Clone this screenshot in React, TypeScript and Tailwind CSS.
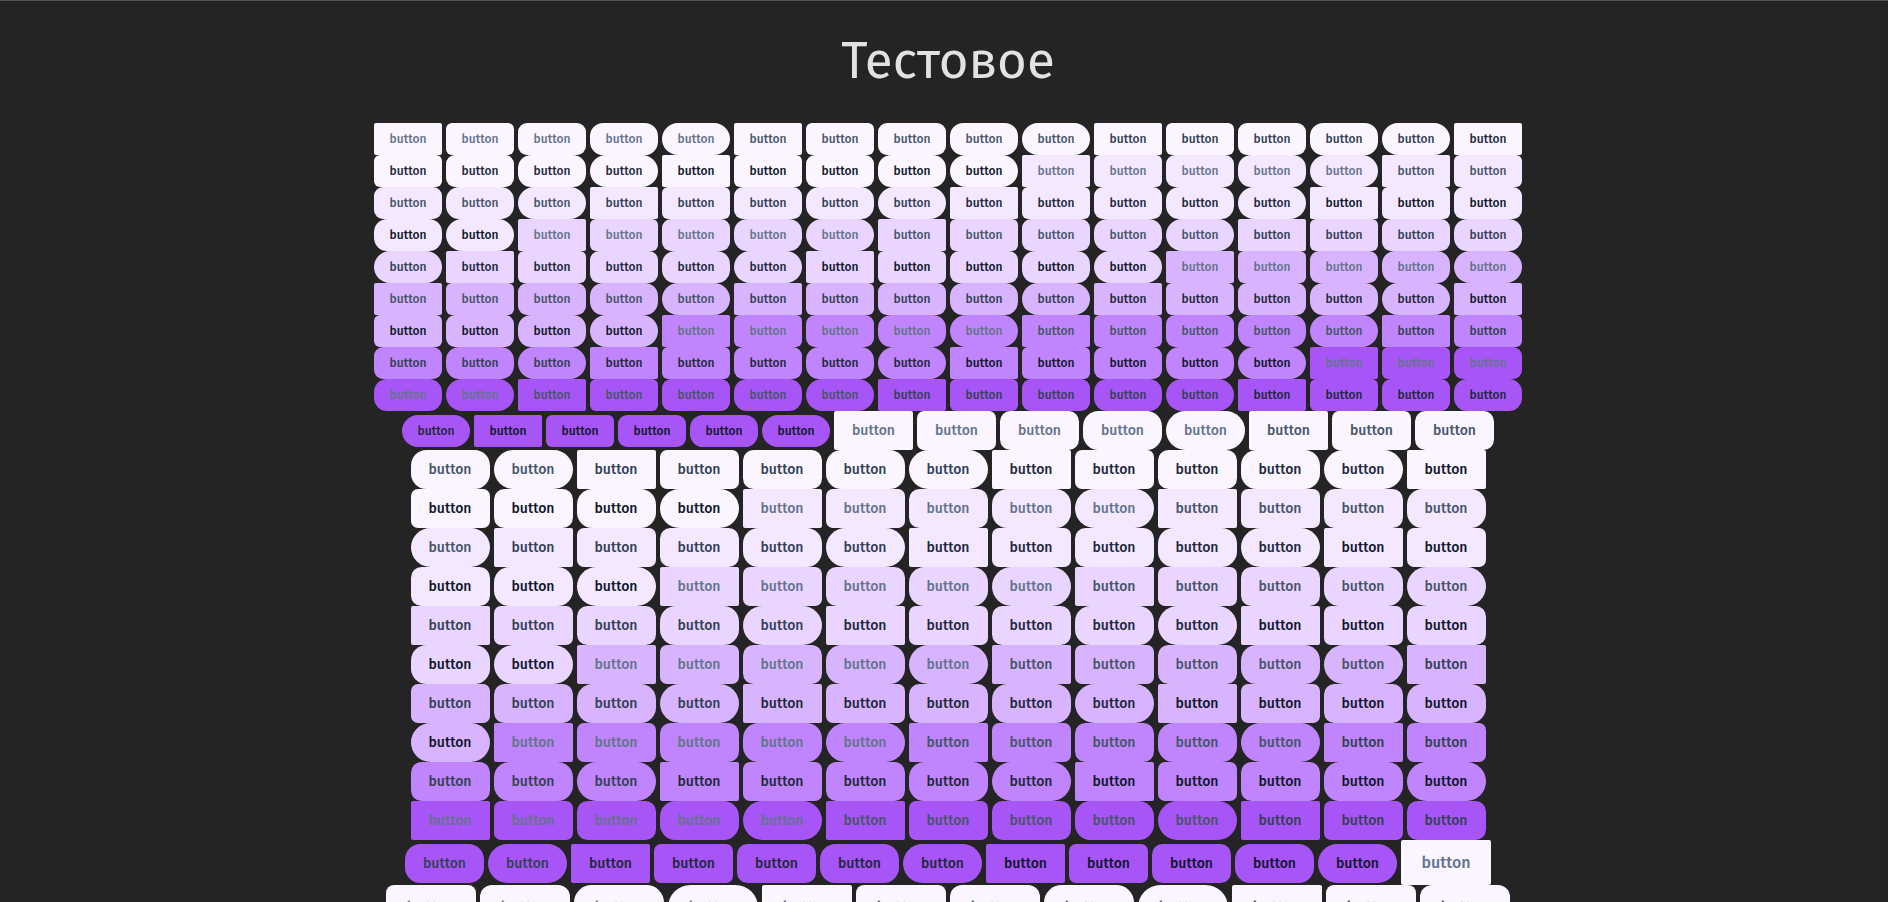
type Size = { box: string; limit: number };

const sizes: Size[] = [
  { box: 'h-8 w-[68px] text-xs', limit: 150 },
  { box: 'h-[39px] w-[79px] text-sm', limit: 150 },
  { box: 'h-[45px] w-[90px] text-base', limit: 13 },
];

const tones = [
  'bg-[#faf5ff]',
  'bg-[#f3e8ff]',
  'bg-[#e9d5ff]',
  'bg-[#d8b4fe]',
  'bg-[#c084fc]',
  'bg-[#a855f7]',
];

const inks = [
  'text-[#64748b]',
  'text-[#475569]',
  'text-[#334155]',
  'text-[#1e293b]',
  'text-[#0f172a]',
];

const radii = ['rounded-[2px]', 'rounded-[0.5em]', 'rounded-[0.75em]', 'rounded-[1.1em]', 'rounded-[1.4em]'];

const buttons = sizes.flatMap((size) =>
  tones
    .flatMap((tone) => inks.flatMap((ink) => radii.map((radius) => `${size.box} ${tone} ${ink} ${radius}`)))
    .slice(0, size.limit),
);

export default function App() {
  return (
    <div className="min-h-screen border-t border-[#555] bg-[#242424] pl-2 font-['Fira_Sans','Noto_Sans',sans-serif]">
      <main className="mx-auto max-w-6xl pt-8">
        <h1 className="text-center text-[51px] leading-[56px] text-white/87">Тестовое</h1>
        <div className="mt-[34px] flex flex-wrap items-baseline justify-center gap-x-1">
          {buttons.map((look, index) => (
            <button key={index} type="button" className={`font-medium ${look}`}>
              button
            </button>
          ))}
        </div>
      </main>
    </div>
  );
}
